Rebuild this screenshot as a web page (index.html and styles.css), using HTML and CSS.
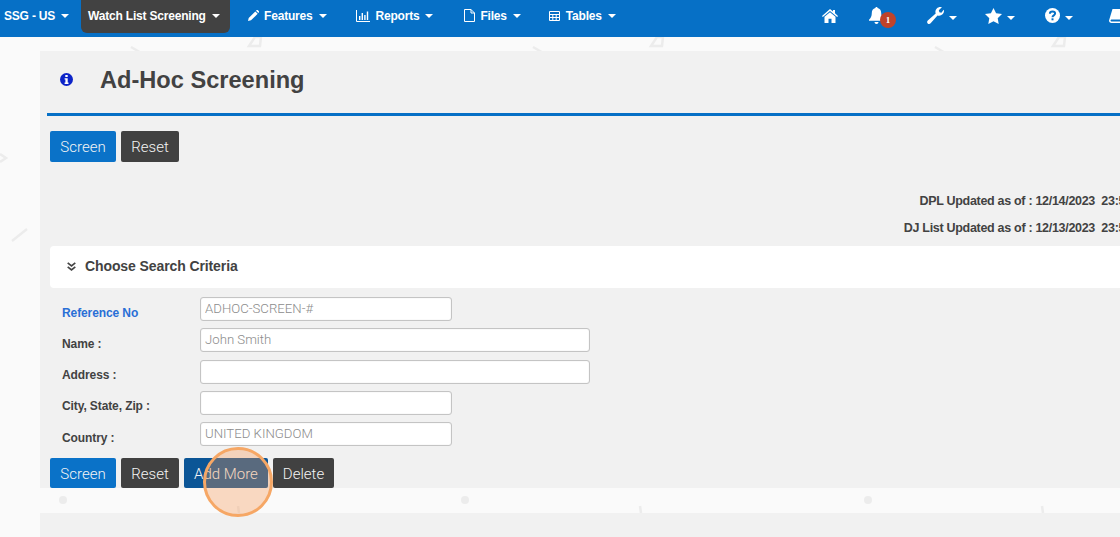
FILE: index.html
```html
<!DOCTYPE html>
<html lang="en">
<head>
<meta charset="utf-8">
<title>Ad-Hoc Screening</title>
<link rel="stylesheet" href="styles.css">
</head>
<body>
<svg class="decor" width="1120" height="537" viewBox="0 0 1120 537" aria-hidden="true">
  <g fill="none" stroke="#ececec" stroke-width="2.5">
    <path d="M249 46l6-9 6 0-1 9z"/><path d="M651 46l6-9 6 0-1 9z"/><path d="M1053 46l6-9 6 0-1 9z"/>
    <path d="M131 47l12 7"/><path d="M533 47l12 7"/><path d="M935 47l12 7"/>
    <path d="M0 154l6 4-6 4"/><path d="M12 241l15-12"/>
    <path d="M238 506l1 7"/><path d="M640 506l1 7"/><path d="M1042 506l1 7"/>
  </g>
  <g fill="#ececec"><circle cx="63" cy="500" r="4"/><circle cx="465" cy="500" r="4"/><circle cx="868" cy="500" r="4"/></g>
</svg>

<nav class="topbar">
  <a class="nav-item nav-brand">SSG - US<i class="caret"></i></a>
  <a class="nav-item nav-active">Watch List Screening<i class="caret"></i></a>
  <a class="nav-item nav-features">
    <svg class="nav-icon" width="11" height="11" viewBox="0 0 11 11"><path fill="#fff" d="M0 11l.7-3L7.300 1.400l2.400 2.400L3 10.300zM8 .7l.7-.7c.4-.2.7-.2 1 0l1.300 1.300c.2.3.2.7 0 1l-.7.7z"/></svg>Features<i class="caret"></i></a>
  <a class="nav-item nav-reports">
    <svg class="nav-icon" width="14" height="12" viewBox="0 0 14 12"><path fill="none" stroke="#fff" d="M.5 0v11.500H14"/><path fill="#fff" d="M3 6h1.400v4H3zM5.600 3h1.400v7H5.600zM8.200 5h1.400v5H8.200zM10.800 1.500h1.400V10h-1.400z"/></svg>Reports<i class="caret"></i></a>
  <a class="nav-item nav-files">
    <svg class="nav-icon" width="11" height="13" viewBox="0 0 11 13"><path fill="none" stroke="#fff" d="M.5.500h6.500l3.500 3.500v8.500H.5zM7 .5V4h3.500"/></svg>Files<i class="caret"></i></a>
  <a class="nav-item nav-tables">
    <svg class="nav-icon" width="11" height="10" viewBox="0 0 11 10"><path fill="none" stroke="#fff" d="M.5.500h10v9H.5zM.5 3.500h10M.5 6.500h10M3.800 3.500v6M7.200 3.500v6"/></svg>Tables<i class="caret"></i></a>

  <div class="nav-tools">
    <svg class="tool tool-home" width="16" height="14" viewBox="0 0 16 14"><path fill="#fff" d="M8 0l3 2.600V1h2v3.300l3 2.600-.8 1L8 1.900.8 7.900 0 6.900zM8 3.200l5.500 4.600V14H9.500V9.800h-3V14H2.500V7.800z"/></svg>
    <span class="tool tool-bell">
      <svg width="15" height="17" viewBox="0 0 15 17"><path fill="#fff" d="M7.500 0c.7 0 1.100.5 1.100 1.100 2.500.5 3.600 2.600 3.600 5 0 3.700 1.100 5 2.800 6.700v1H0v-1C1.700 11.100 2.800 9.800 2.800 6.100c0-2.400 1.100-4.500 3.600-5C6.400.5 6.800 0 7.500 0zM5.500 15h4c0 1.200-.9 2-2 2s-2-.8-2-2z"/></svg>
      <b class="badge">1</b>
    </span>
    <span class="tool tool-wrench">
      <svg width="17" height="17" viewBox="0 0 17 17"><path fill="#fff" d="M17 3.800c0 2.700-2.200 4.900-4.900 4.900-.6 0-1.100-.1-1.600-.3l-6.900 7.900c-.8.900-2.100.9-2.900.1-.8-.8-.8-2.100.1-2.900l7.900-6.900c-.2-.5-.3-1-.3-1.600C8.400 2.200 10.600 0 13.300 0c.6 0 1.100.1 1.600.3L11.800 3.200l.6 2 2 .6L16.700 2.800c.2.300.3.600.3 1z"/></svg>
      <i class="caret"></i>
    </span>
    <span class="tool tool-star">
      <svg width="17" height="16" viewBox="0 0 17 16"><path fill="#fff" d="M8.500 0l2.600 5.300 5.900.8-4.300 4.100 1 5.800-5.200-2.700L3.300 16l1-5.800L0 6.100l5.900-.8z"/></svg>
      <i class="caret"></i>
    </span>
    <span class="tool tool-help">
      <svg width="15" height="15" viewBox="0 0 15 15"><circle cx="7.500" cy="7.500" r="7.500" fill="#fff"/><path fill="none" stroke="#0670c6" stroke-width="2" d="M4.900 5.800c0-1.500 1.200-2.300 2.600-2.300 1.500 0 2.600.8 2.600 2.100 0 1.800-2.600 1.800-2.600 3.700"/><rect x="6.500" y="10.300" width="2" height="2" fill="#0670c6"/></svg>
      <i class="caret"></i>
    </span>
    <svg class="tool tool-book" width="16" height="14" viewBox="0 0 16 14"><path fill="#fff" d="M3.500 0H16l-2 10.500H3c-1 0-1.500.5-1.500 1s.5 1 1.500 1h11.800V14H2.500C1 14 0 13 0 11.500z"/></svg>
  </div>
</nav>

<main class="page">
  <section class="panel">
    <header class="page-head">
      <svg class="info-icon" width="13" height="13" viewBox="0 0 13 13"><circle cx="6.500" cy="6.500" r="6.500" fill="#0d24c8"/><path fill="#fff" d="M5.300 2h2.400v2H5.300zM4.600 5.200h3.100v4.300h.8v1.400H4.600V9.500h.8V6.600h-.8z"/></svg>
      <h1 class="page-title">Ad-Hoc Screening</h1>
    </header>

    <div class="btn-row btn-row-top">
      <button class="btn btn-blue btn-screen">Screen</button>
      <button class="btn btn-dark btn-reset">Reset</button>
    </div>

    <div class="updates">
      <p class="update-line">DPL Updated as of : 12/14/2023&nbsp;&nbsp;23:59:59</p>
      <p class="update-line">DJ List Updated as of : 12/13/2023&nbsp;&nbsp;23:59:59</p>
    </div>

    <div class="criteria-head">
      <svg class="chevrons" width="9" height="9" viewBox="0 0 9 9"><path fill="none" stroke="#444" stroke-width="1.700" d="M.7.800l3.800 3 3.800-3M.7 4.800l3.800 3 3.800-3"/></svg>
      <h2 class="criteria-title">Choose Search Criteria</h2>
    </div>

    <form class="form-grid">
      <label class="field-label field-ref">Reference No</label>
      <input class="field field-short" value="ADHOC-SCREEN-#">
      <label class="field-label">Name :</label>
      <input class="field field-long" value="John Smith">
      <label class="field-label">Address :</label>
      <input class="field field-long" value="">
      <label class="field-label">City, State, Zip :</label>
      <input class="field field-short" value="">
      <label class="field-label">Country :</label>
      <input class="field field-short" value="UNITED KINGDOM">
    </form>

    <div class="btn-row btn-row-bottom">
      <button class="btn btn-blue btn-screen">Screen</button>
      <button class="btn btn-dark btn-reset">Reset</button>
      <button class="btn btn-navy btn-add">Add More</button>
      <button class="btn btn-dark btn-delete">Delete</button>
      <span class="highlight"></span>
    </div>
  </section>
  <div class="panel-next"></div>
</main>
</body>
</html>
```

FILE: styles.css
```css
* { box-sizing: border-box; }

html, body {
  margin: 0;
  height: 537px;
  overflow: hidden;
}

body {
  background: #fafafa;
  color: #424242;
  font-family: "Liberation Sans", Arial, sans-serif;
  position: relative;
}

.decor {
  position: absolute;
  left: 0;
  top: 0;
}

/* top navigation */
.topbar {
  position: relative;
  display: flex;
  align-items: flex-start;
  height: 37px;
  background: #0670c6;
  color: #fff;
  font-size: 12px;
  font-weight: 700;
  letter-spacing: -0.2px;
}

.nav-item {
  display: flex;
  align-items: center;
  height: 31px;
  white-space: nowrap;
}

.nav-brand { margin-left: 4px; }

.nav-active {
  margin-left: 12px;
  padding: 0 0 2px 7px;
  width: 149px;
  height: 33px;
  background: #424242;
  border-radius: 0 0 6px 6px;
}

.nav-features { margin-left: 18px; }
.nav-reports { margin-left: 29px; }
.nav-files { margin-left: 31px; }
.nav-tables { margin-left: 28px; }

.nav-icon { margin-right: 5px; flex: none; }
.nav-reports .nav-icon,
.nav-tables .nav-icon { margin-right: 6px; }

.caret {
  display: inline-block;
  width: 0;
  height: 0;
  margin-left: 6px;
  border-top: 4.500px solid #fff;
  border-left: 4px solid transparent;
  border-right: 4px solid transparent;
}

.nav-tools {
  display: flex;
  align-items: center;
  height: 31px;
  position: absolute;
  left: 822px;
  top: 0;
  width: 320px;
}

.tool { display: flex; align-items: center; flex: none; }
.tool .caret { margin-left: 5px; margin-top: 4px; }
.tool-bell { position: relative; margin-left: 31px; }
.tool-wrench { margin-left: 43px; }
.tool-star { margin-left: 28px; }
.tool-help { margin-left: 30px; }
.tool-book { margin-left: 36px; width: 16px; }

.badge {
  position: absolute;
  left: 11px;
  top: 5px;
  width: 16px;
  height: 16px;
  border-radius: 50%;
  background: #c0432a;
  color: #fff;
  font: 700 9px/16px "Liberation Serif", serif;
  text-align: center;
}

/* page */
.page {
  position: relative;
  padding: 14px 0 0 40px;
  width: 1120px;
}

.panel {
  background: #f1f1f1;
  padding: 0 0 0 10px;
  width: 1080px;
}

.panel-next {
  height: 24px;
  margin-top: 25px;
  background: #f1f1f1;
}

.page-head {
  display: flex;
  align-items: center;
  height: 65px;
  margin-left: -3px;
  border-bottom: 3px solid #0670c6;
  padding: 0 0 5px 13px;
}

.info-icon { flex: none; }

.page-title {
  margin: 0 0 0 27px;
  font-size: 23.600px;
  font-weight: 700;
  line-height: 30px;
}

.btn-row {
  display: flex;
  gap: 5px;
  position: relative;
}

.btn-row-top { margin-top: 15px; }
.btn-row-bottom { margin-top: 12px; }

.btn {
  height: 31px;
  padding: 0;
  border: 0;
  border-radius: 2px;
  color: #f4f4f4;
  font-family: Roboto, "Liberation Sans", Arial, sans-serif;
  font-size: 15px;
  font-weight: 300;
}

.btn-row-bottom .btn { height: 30px; padding-top: 1px; }

.btn-blue { background: #0a72c8; }
.btn-dark { background: #414141; }
.btn-navy { background: #0b5596; }

.btn-screen { width: 66px; }
.btn-reset { width: 58px; }
.btn-add { width: 84px; }
.btn-delete { width: 61px; }

.highlight {
  position: absolute;
  left: 153px;
  top: -11px;
  width: 70px;
  height: 70px;
  border-radius: 50%;
  background: rgba(248, 150, 80, 0.33);
  border: 3px solid #f6a765;
}

.updates {
  margin-top: 26px;
  height: 58px;
  width: 1099px;
  text-align: right;
}

.update-line {
  margin: 0;
  font-size: 12.500px;
  font-weight: 700;
  letter-spacing: -0.3px;
  line-height: 27px;
  white-space: nowrap;
}

.criteria-head {
  display: flex;
  align-items: center;
  height: 42px;
  padding: 0 0 2px 17px;
  background: #fff;
  border-radius: 4px 0 0 4px;
}

.chevrons { flex: none; }

.criteria-title {
  margin: 0 0 0 9px;
  font-size: 14px;
  font-weight: 700;
  letter-spacing: -0.1px;
}

.form-grid {
  display: grid;
  grid-template-columns: 150px 1fr;
  grid-auto-rows: 24px;
  row-gap: 7.300px;
  margin-top: 9px;
  align-items: center;
}

.field-label {
  padding: 7px 0 0 12px;
  font-size: 12px;
  font-weight: 700;
  letter-spacing: -0.1px;
  white-space: nowrap;
}

.field-ref { color: #2a6fd6; }

.field {
  height: 24px;
  padding: 0 4px 2px;
  border: 1px solid #c4c4c4;
  box-shadow: inset 0 0 1px #ccc;
  border-radius: 3px;
  background: #fff;
  color: #8c8c8c;
  font-family: Roboto, "Liberation Sans", Arial, sans-serif;
  font-size: 13.200px;
  font-weight: 300;
}

.field-short { width: 252px; }
.field-long { width: 390px; }
```
